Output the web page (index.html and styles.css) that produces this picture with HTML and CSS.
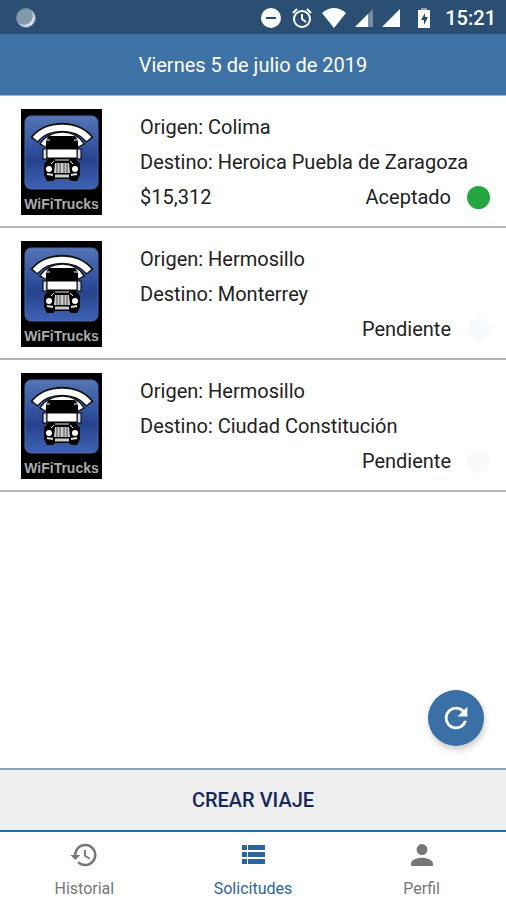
FILE: index.html
```html
<!DOCTYPE html>
<html lang="es">

<head>
    <meta charset="UTF-8">
    <meta name="viewport" content="width=device-width, initial-scale=1.0">
    <title>WiFiTrucks - Solicitudes</title>
    <link rel="stylesheet" href="styles.css">
</head>

<body>
    <!-- Truck badge shared by every trip -->
    <svg width="0" height="0" class="sprite" aria-hidden="true">
        <defs>
            <linearGradient id="tileFill" x1="0" y1="0" x2="0" y2="1">
                <stop offset="0" stop-color="#5574b4" />
                <stop offset="0.4" stop-color="#3455a2" />
                <stop offset="0.6" stop-color="#27428c" />
                <stop offset="1" stop-color="#3f62b5" />
            </linearGradient>
        </defs>
        <symbol id="truck" viewBox="0 0 81 84">
            <rect x="4" y="7" width="73" height="73" rx="6" fill="url(#tileFill)" stroke="#4a68a8" />
            <g fill="none">
                <path d="M13 31 C26 14 56 14 69 31" stroke="#111" stroke-width="9" />
                <path d="M14 30 C27 15 55 15 68 30" stroke="#fff" stroke-width="6" />
                <path d="M21 37 C30 22 53 22 61 37" stroke="#111" stroke-width="7" />
                <path d="M22 36 C31 23 52 23 60 36" stroke="#fff" stroke-width="5" />
            </g>
            <!-- cab, windshield and mirrors -->
            <path d="M28 27 h26 l3 4 v12 h-32 v-12z" fill="#000" />
            <path d="M25 31 h4 M53 31 h4" stroke="#fff" />
            <rect x="22" y="40" width="4" height="10" fill="#ddd" stroke="#000" />
            <rect x="56" y="40" width="4" height="10" fill="#ddd" stroke="#000" />
            <rect x="26" y="40" width="30" height="9" fill="#fff" stroke="#000" />
            <!-- hood, wheels and grill -->
            <path d="M28 49 h26 l5 6 v11 l-3 6 h-6 l-2 -2 h-14 l-2 2 h-6 l-3 -6 v-11z" fill="#000" />
            <path d="M34 54 h14 l1 10 h-16z" fill="#ccc" />
            <path d="M36 54 v10 M39 54 v10 M43 54 v10 M46 54 v10" stroke="#444" />
            <path d="M34 51 h14 M30 55 l3 -3 M52 55 l-3 -3" stroke="#eee" fill="none" />
            <path d="M34 67 h14" stroke="#ccc" stroke-width="3" />
            <circle cx="28" cy="60" r="3" fill="#fff" />
            <circle cx="54" cy="60" r="3" fill="#fff" />
            <path d="M26 65 l6 1 M56 65 l-6 1" stroke="#ddd" stroke-width="2" />
        </symbol>
    </svg>

    <div class="app">
        <div class="status-bar">
            <span class="status-dot"></span>
            <div class="status-icons">
                <svg width="22" height="22" viewBox="0 0 22 22">
                    <circle cx="11" cy="11" r="10" fill="#fff" />
                    <rect x="6" y="10" width="10" height="2" fill="#28486f" />
                </svg>
                <svg width="22" height="22" viewBox="0 0 22 22" fill="none" stroke="#fff" stroke-width="2">
                    <circle cx="11" cy="12" r="8" />
                    <path d="M11 7v5l4 3M2 6l4-4M20 6l-4-4" />
                </svg>
                <svg width="24" height="20" viewBox="0 0 26 20" preserveAspectRatio="none" fill="#fff">
                    <path d="M13 20 L0 5 Q13 -5 26 5z" />
                </svg>
                <svg width="18" height="18" viewBox="0 0 18 18" fill="#fff">
                    <path d="M18 0v18H0z" opacity="0.35" />
                    <path d="M13 5v13H0z" />
                </svg>
                <svg width="18" height="18" viewBox="0 0 18 18" fill="#fff">
                    <path d="M18 0v18H0z" />
                </svg>
                <svg class="battery" width="14" height="20" viewBox="0 0 14 20">
                    <path d="M4 0h6v2h3v18H1V2h3z" fill="#fff" />
                    <path d="M4 0h6v2H4z" fill="#8fa3b7" />
                    <path d="M8 5l-4 7h3v5l4-8H8z" fill="#28486f" />
                </svg>
            </div>
            <span class="clock">15:21</span>
        </div>

        <header class="header">Viernes 5 de julio de 2019</header>

        <main class="trips">
            <article class="trip">
                <div class="logo">
                    <svg class="logo-art" aria-hidden="true"><use href="#truck" /></svg>
                    <span class="logo-name">WiFiTrucks</span>
                </div>
                <div class="trip-info">
                    <p>Origen: Colima</p>
                    <p>Destino: Heroica Puebla de Zaragoza</p>
                    <p class="trip-state">
                        <span class="price">$15,312</span>
                        <span>Aceptado</span>
                        <span class="dot accepted"></span>
                    </p>
                </div>
            </article>

            <article class="trip">
                <div class="logo">
                    <svg class="logo-art" aria-hidden="true"><use href="#truck" /></svg>
                    <span class="logo-name">WiFiTrucks</span>
                </div>
                <div class="trip-info">
                    <p>Origen: Hermosillo</p>
                    <p>Destino: Monterrey</p>
                    <p class="trip-state">
                        <span>Pendiente</span>
                        <span class="dot"></span>
                    </p>
                </div>
            </article>

            <article class="trip">
                <div class="logo">
                    <svg class="logo-art" aria-hidden="true"><use href="#truck" /></svg>
                    <span class="logo-name">WiFiTrucks</span>
                </div>
                <div class="trip-info">
                    <p>Origen: Hermosillo</p>
                    <p>Destino: Ciudad Constitución</p>
                    <p class="trip-state">
                        <span>Pendiente</span>
                        <span class="dot"></span>
                    </p>
                </div>
            </article>

            <button type="button" class="refresh" aria-label="Actualizar">
                <svg width="34" height="34" viewBox="0 0 24 24" fill="#fff">
                    <path d="M17.65 6.35A7.96 7.96 0 0 0 12 4a8 8 0 1 0 7.73 10h-2.08A6 6 0 1 1 12 6c1.66 0 3.14.69 4.22 1.78L13 11h7V4z" />
                </svg>
            </button>
        </main>

        <button type="button" class="create">CREAR VIAJE</button>

        <nav class="tabs">
            <a href="#historial" class="tab">
                <svg width="32" height="30" viewBox="0 0 24 24" fill="currentColor">
                    <path d="M13 3a9 9 0 0 0-9 9H1l3.89 3.89.07.14L9 12H6a7 7 0 1 1 2.06 4.94l-1.42 1.42A9 9 0 1 0 13 3zm-1 5v5l4.28 2.54.72-1.21-3.5-2.08V8z" />
                </svg>
                <span>Historial</span>
            </a>
            <a href="#solicitudes" class="tab active">
                <svg width="30" height="30" viewBox="0 0 30 30" fill="currentColor">
                    <path d="M4 5h5v5H4zM10 5h17v5H10zM4 12h5v5H4zM10 12h17v5H10zM4 19h5v5H4zM10 19h17v5H10z" />
                </svg>
                <span>Solicitudes</span>
            </a>
            <a href="#perfil" class="tab">
                <svg width="34" height="30" viewBox="0 0 24 22" fill="currentColor">
                    <path d="M12 11a4 4 0 1 0 0-8 4 4 0 0 0 0 8zm0 2c-2.67 0-8 1.34-8 4v2h16v-2c0-2.66-5.33-4-8-4z" />
                </svg>
                <span>Perfil</span>
            </a>
        </nav>
    </div>
</body>

</html>
```

FILE: styles.css
```css
* {
    box-sizing: border-box;
}

body {
    margin: 0;
    font-family: Roboto, "Liberation Sans", sans-serif;
    font-size: 20px;
    color: #222;
    background-color: #fff;
}

p {
    margin: 0;
}

svg {
    display: block;
}

.sprite {
    position: absolute;
}

.app {
    display: flex;
    flex-direction: column;
    min-height: 100vh;
}

/* Status bar */
.status-bar {
    display: flex;
    align-items: center;
    height: 34px;
    padding: 2px 10px 0 16px;
    background-color: #2b4f72;
    color: #fff;
}

.status-dot {
    width: 20px;
    height: 20px;
    border-radius: 50%;
    background-color: #8299ae;
    border: 1px solid #7089a0;
    box-shadow: inset -2px -2px 1px #dde5ec;
}

.status-icons {
    display: flex;
    align-items: center;
    gap: 9px;
    margin-left: auto;
}

.battery {
    margin-left: 8px;
}

.clock {
    margin-left: 14px;
    font-weight: 500;
}

.header {
    height: 62px;
    line-height: 62px;
    text-align: center;
    color: #fff;
    background-color: #3f72a4;
    border-bottom: 1px solid #a3b3c6;
}

/* Trip list */
.trips {
    position: relative;
    flex: 1;
}

.trip {
    display: flex;
    align-items: center;
    gap: 38px;
    padding: 13px 16px 11px 21px;
    border-bottom: 2px solid #b5b5b5;
}

.logo {
    width: 81px;
    height: 106px;
    flex-shrink: 0;
    background-color: #000;
}

.logo-art {
    width: 81px;
    height: 84px;
}

.logo-name {
    display: block;
    font-family: "Liberation Sans", Arial, sans-serif;
    font-size: 14px;
    font-weight: bold;
    line-height: 22px;
    text-align: center;
    color: #aaa;
}

.trip-info {
    flex: 1;
    line-height: 35px;
}

.trip-state {
    display: flex;
    align-items: center;
    justify-content: flex-end;
}

.price {
    margin-right: auto;
}

.dot {
    width: 23px;
    height: 23px;
    margin-left: 16px;
    border-radius: 50%;
    background-color: #f8fafb;
}

.dot.accepted {
    background-color: #26a641;
}

.refresh {
    position: absolute;
    right: 22px;
    bottom: 22px;
    display: flex;
    align-items: center;
    justify-content: center;
    width: 56px;
    height: 56px;
    padding: 0;
    border: none;
    border-radius: 50%;
    background-color: #3a70a6;
    box-shadow: 1px 4px 6px rgba(0, 0, 0, 0.2);
    cursor: pointer;
}

.create {
    height: 64px;
    border: none;
    border-top: 2px solid #8fa3bd;
    border-bottom: 2px solid #2a6d9c;
    background-color: #eee;
    color: #14285c;
    font-family: inherit;
    font-size: 20px;
    font-weight: 500;
    cursor: pointer;
}

/* Bottom tabs */
.tabs {
    display: grid;
    grid-template-columns: repeat(3, 1fr);
    height: 68px;
    padding-top: 8px;
}

.tab {
    display: flex;
    flex-direction: column;
    align-items: center;
    gap: 8px;
    font-size: 16px;
    line-height: 22px;
    color: #777;
    text-decoration: none;
}

.tab.active {
    color: #2a659c;
}
```
